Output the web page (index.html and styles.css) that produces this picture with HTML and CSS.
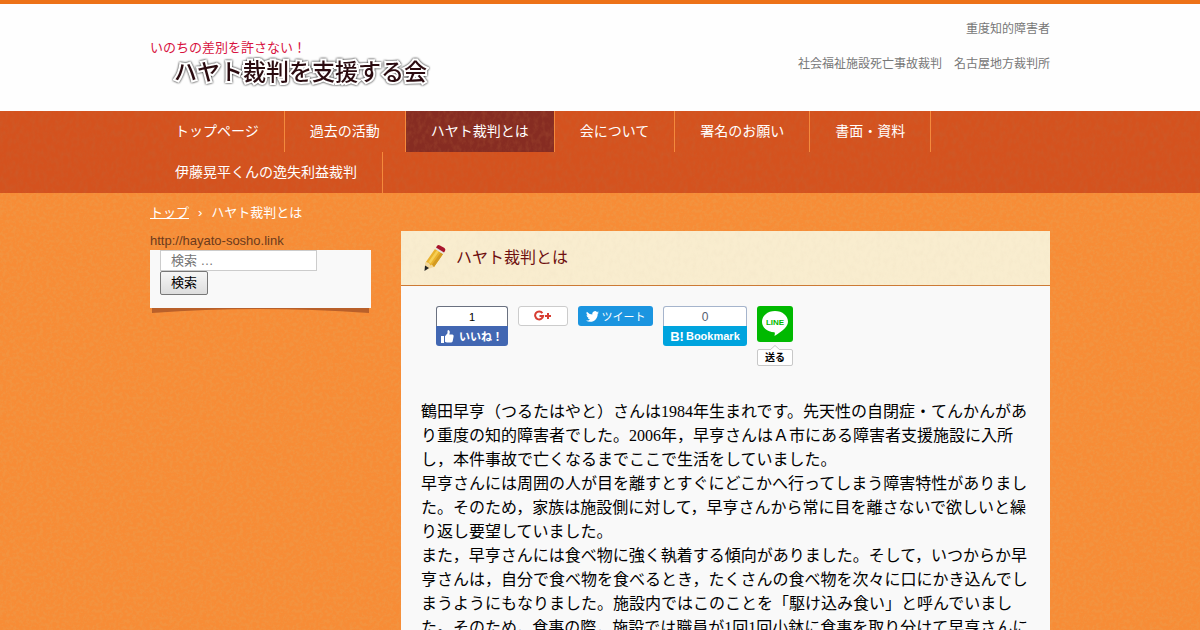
FILE: index.html
```html
<!DOCTYPE html>
<html lang="ja">

<head>
  <meta charset="UTF-8" />
  <meta name="viewport" content="width=device-width, initial-scale=1" />
  <title>ハヤト裁判とは</title>
  <link rel="stylesheet" href="styles.css">
</head>

<body>
  <header class="header">
    <div class="inner header-inner">
      <a class="logo" href="#">
        <span class="logo-sub">いのちの差別を許さない！</span>
        <span class="logo-main">ハヤト裁判を支援する会</span>
      </a>
      <div class="header-text">
        <p>重度知的障害者</p>
        <p>社会福祉施設死亡事故裁判　名古屋地方裁判所</p>
      </div>
    </div>
  </header>

  <nav class="nav">
    <ul class="inner nav-list">
      <li><a href="#">トップページ</a></li>
      <li><a href="#">過去の活動</a></li>
      <li><a class="current" href="#">ハヤト裁判とは</a></li>
      <li><a href="#">会について</a></li>
      <li><a href="#">署名のお願い</a></li>
      <li><a href="#">書面・資料</a></li>
      <li><a href="#">伊藤晃平くんの逸失利益裁判</a></li>
    </ul>
  </nav>

  <div class="inner">
    <div class="breadcrumb"><a href="#">トップ</a><span>›</span>ハヤト裁判とは</div>

    <div class="columns">
      <aside class="sidebar">
        <div class="site-url">http://hayato-sosho.link</div>
        <form class="search">
          <input type="search" placeholder="検索 …" aria-label="検索" />
          <button type="submit">検索</button>
        </form>
        <svg class="search-shadow" viewBox="0 0 217 6" preserveAspectRatio="none" aria-hidden="true">
          <path d="M0 0H217V5Q160 1 108 1Q57 1 0 5Z" fill="#b9602a" />
        </svg>
      </aside>

      <main class="article">
        <h1 class="article-title">
          <svg width="24" height="28" viewBox="0 0 24 28" aria-hidden="true">
            <path d="M2 19L12 5L20 10L11 23L2 26Z" fill="#f2d79b" />
            <path d="M3 18L12 5L20 10L11 23L9 20.500L7.500 21.500L6 19Z" fill="#e9b22d" />
            <path d="M5.500 18L14 6L16 7.300L7.500 19.500Z" fill="#f6cf55" />
            <path d="M9 20.500L17.800 8.500L20 10L11 23Z" fill="#d39a22" />
            <path d="M12 5L13.500 3L21.500 8L20 10Z" fill="#e6e2dc" />
            <path d="M13 3.500L14 2Q15 .5 17 1.500L21.500 4Q23 5.500 22 7L21 8.500Z" fill="#a8142c" />
            <path d="M2 21.500L6 24L1.500 27Z" fill="#222" />
          </svg>
          ハヤト裁判とは
        </h1>

        <div class="share">
          <div class="share-item facebook">
            <span class="count">1</span>
            <a href="#">
              <svg width="13" height="13" viewBox="0 0 13 13" aria-hidden="true">
                <path d="M0 6H3V13H0ZM4 6.300L6.500 3.200V1Q6.600 0 7.500 0Q9 .5 8.800 2.500L8.300 4.600H11.500Q13 5 12.600 6.500L11.600 11.500Q11.200 12.600 10 12.600H6Q5 12.500 4 11.800Z" fill="#fff" />
              </svg>
              いいね！
            </a>
          </div>
          <a class="share-item google" href="#" aria-label="Google+">
            <svg width="18" height="12" viewBox="0 0 18 12" aria-hidden="true">
              <path d="M8.400 3.100A4 4 0 1 0 9.100 6H5.500M11 6H17M14 3V9" fill="none" stroke="#d73d32" stroke-width="2" />
            </svg>
          </a>
          <a class="share-item twitter" href="#">
            <svg width="13" height="11" viewBox="0 0 24 20" aria-hidden="true">
              <path d="M24 2.400a10 10 0 0 1-2.800.8A5 5 0 0 0 23.300.5a10 10 0 0 1-3.100 1.200A4.900 4.900 0 0 0 11.800 6.200 14 14 0 0 1 1.700 1a4.900 4.900 0 0 0 1.500 6.600A5 5 0 0 1 1 7v.1a4.900 4.900 0 0 0 3.900 4.800 5 5 0 0 1-2.200.1 4.900 4.900 0 0 0 4.600 3.400A9.900 9.900 0 0 1 0 17.500 14 14 0 0 0 7.500 19.700c9.100 0 14.300-7.700 14-14.600A10 10 0 0 0 24 2.400z" fill="#fff" />
            </svg>
            ツイート
          </a>
          <div class="share-item hatena">
            <span class="count">0</span>
            <a href="#"><b>B!</b>Bookmark</a>
          </div>
          <a class="share-item line" href="#">
            <span class="line-icon">
              <svg width="28" height="26" viewBox="0 0 28 26" aria-hidden="true">
                <path d="M14 0C21.500 0 27 4.800 27 10.700C27 15 22.500 19.500 13.500 25Q14.300 22 13.500 21.300C6 20.800 1 16.500 1 10.700C1 4.800 6.500 0 14 0Z" fill="#fff" />
                <text class="line-word" x="14" y="14" text-anchor="middle">LINE</text>
              </svg>
            </span>
            <svg class="line-tip" width="10" height="5" viewBox="0 0 10 5" aria-hidden="true">
              <path d="M0 5L5 .5L10 5" fill="#fff" stroke="#c8c8c8" />
            </svg>
            <span class="line-label">送る</span>
          </a>
        </div>

        <div class="article-body">
          <p>鶴田早亨（つるたはやと）さんは1984年生まれです。先天性の自閉症・てんかんがあり重度の知的障害者でした。2006年，早亨さんはＡ市にある障害者支援施設に入所し，本件事故で亡くなるまでここで生活をしていました。</p>
          <p>早亨さんには周囲の人が目を離すとすぐにどこかへ行ってしまう障害特性がありました。そのため，家族は施設側に対して，早亨さんから常に目を離さないで欲しいと繰り返し要望していました。</p>
          <p>また，早亨さんには食べ物に強く執着する傾向がありました。そして，いつからか早亨さんは，自分で食べ物を食べるとき，たくさんの食べ物を次々に口にかき込んでしまうようにもなりました。施設内ではこのことを「駆け込み食い」と呼んでいました。そのため，食事の際，施設では職員が1回1回小鉢に食事を取り分けて早亨さんに</p>
        </div>
      </main>
    </div>
  </div>
</body>

</html>
```
FILE: styles.css
```css
:root {
  --grain: url("data:image/svg+xml,%3Csvg xmlns='http://www.w3.org/2000/svg' width='200' height='200'%3E%3Cfilter id='n' x='0' y='0' width='100%25' height='100%25'%3E%3CfeTurbulence type='fractalNoise' baseFrequency='.3' numOctaves='3' stitchTiles='stitch'/%3E%3CfeColorMatrix values='0 0 0 0 .78 0 0 0 0 .38 0 0 0 0 .1 4 0 0 0 -1.7'/%3E%3C/filter%3E%3Crect width='200' height='200' filter='url(%23n)' opacity='.25'/%3E%3C/svg%3E");
  --fiber: url("data:image/svg+xml,%3Csvg xmlns='http://www.w3.org/2000/svg' width='200' height='200'%3E%3Cfilter id='n' x='0' y='0' width='100%25' height='100%25'%3E%3CfeTurbulence type='fractalNoise' baseFrequency='.25 .15' numOctaves='3' stitchTiles='stitch'/%3E%3CfeColorMatrix values='0 0 0 0 .5 0 0 0 0 .15 0 0 0 0 .05 2 0 0 0 -.8'/%3E%3C/filter%3E%3Crect width='200' height='200' filter='url(%23n)' opacity='.25'/%3E%3C/svg%3E");
  --paper: url("data:image/svg+xml,%3Csvg xmlns='http://www.w3.org/2000/svg' width='200' height='200'%3E%3Cfilter id='n' x='0' y='0' width='100%25' height='100%25'%3E%3CfeTurbulence type='fractalNoise' baseFrequency='.25 .15' numOctaves='3' stitchTiles='stitch'/%3E%3CfeColorMatrix values='0 0 0 0 .8 0 0 0 0 .7 0 0 0 0 .5 2 0 0 0 -.8'/%3E%3C/filter%3E%3Crect width='200' height='200' filter='url(%23n)' opacity='.2'/%3E%3C/svg%3E");
}

* {
  box-sizing: border-box;
}

body {
  margin: 0;
  background: #f78c36 var(--grain);
  font-family: "Liberation Sans", "Noto Sans CJK JP", sans-serif;
  font-size: 13px;
  color: #000;
}

a {
  color: inherit;
  text-decoration: none;
}

.inner {
  max-width: 900px;
  margin: 0 auto;
}

/* header */
.header {
  background: #fefefe;
  border-top: 4px solid #ed7218;
}

.header-inner {
  display: flex;
  justify-content: space-between;
  min-height: 107px;
}

.logo {
  display: flex;
  flex-direction: column;
  padding-top: 35px;
}

.logo-sub {
  font-size: 13px;
  line-height: 18px;
  color: #d8123f;
}

.logo-main {
  padding-left: 24px;
  font-size: 23px;
  font-weight: 500;
  line-height: 30px;
  color: #2b0b10;
  -webkit-text-stroke: 4px #fff;
  paint-order: stroke fill;
  filter: drop-shadow(0 0 1px #000);
}

.header-text {
  padding-top: 16px;
  font-size: 12px;
  line-height: 18px;
  color: #777;
  text-align: right;
}

.header-text p {
  margin: 0 0 17px;
}

/* navigation */
.nav {
  background: #d4521e var(--fiber);
}

.nav-list {
  display: flex;
  flex-wrap: wrap;
  padding: 0;
  list-style: none;
}

.nav-list a {
  display: block;
  padding: 0 25px;
  border-right: 1px solid #f48a3c;
  font-size: 14px;
  line-height: 41px;
  color: #fff;
}

.nav-list .current {
  background: #862c22 var(--fiber);
}

.breadcrumb {
  padding: 10px 0 8px;
  line-height: 20px;
  color: #fff;
}

.breadcrumb a {
  text-decoration: underline;
}

.breadcrumb span {
  margin: 0 9px;
}

.columns {
  display: flex;
  align-items: flex-start;
  gap: 30px;
}

/* sidebar */
.sidebar {
  flex: 0 0 221px;
}

.site-url {
  line-height: 19px;
  color: #6b3a1c;
}

.search {
  display: flex;
  flex-direction: column;
  align-items: flex-start;
  padding: 0 10px 13px;
  background: #f9f9f9;
}

.search input {
  width: 157px;
  height: 21px;
  margin: 0;
  padding: 0 10px;
  border: 1px solid #ccc;
  background: #fff;
  font: inherit;
  appearance: none;
}

.search input::placeholder {
  color: #757575;
}

.search button {
  height: 24px;
  padding: 0 10px;
  border: 1px solid #777;
  border-radius: 2px;
  background: linear-gradient(#f6f6f6, #ddd);
  font: inherit;
  line-height: 20px;
}

.search-shadow {
  display: block;
  width: 100%;
  height: 6px;
  padding: 0 2px;
}

/* article */
.article {
  flex: 1;
  min-width: 0;
  background: #f9f9f9;
}

.article-title {
  display: flex;
  align-items: center;
  gap: 9px;
  margin: 0;
  padding: 13px 22px;
  border-bottom: 1px solid #cc7a35;
  background: #f9edcf var(--paper);
  font-size: 16px;
  font-weight: 400;
  line-height: 28px;
  color: #6e0f0f;
}

.share {
  display: flex;
  align-items: flex-start;
  gap: 10px;
  padding: 20px 35px 34px;
  font-size: 11px;
}

.facebook,
.hatena {
  display: flex;
  flex-direction: column;
  text-align: center;
}

.count {
  height: 20px;
  border: 1px solid #6a7180;
  border-bottom: 0;
  border-radius: 3px 3px 0 0;
  background: #fff;
  line-height: 20px;
}

.facebook {
  width: 72px;
}

.facebook a,
.hatena a {
  display: flex;
  align-items: center;
  justify-content: center;
  height: 20px;
  border-radius: 0 0 3px 3px;
  color: #fff;
  font-weight: 700;
}

.facebook a {
  gap: 5px;
  background: #4267b2;
}

.hatena {
  width: 84px;
}

.hatena .count {
  border-color: #a5b4cc;
  font-size: 12px;
  color: #555e70;
}

.hatena a {
  gap: 2px;
  background: #00a4de;
}

.hatena b {
  font-size: 13px;
}

.google,
.twitter {
  display: flex;
  align-items: center;
  justify-content: center;
  height: 20px;
  border-radius: 3px;
}

.google {
  width: 50px;
  border: 1px solid #ccc;
  background: #fff;
}

.twitter {
  width: 75px;
  gap: 3px;
  background: #1b95e0;
  color: #fff;
}

.line {
  display: flex;
  flex-direction: column;
  align-items: center;
  width: 36px;
}

.line-icon {
  display: flex;
  align-items: center;
  justify-content: center;
  width: 36px;
  height: 36px;
  border-radius: 3px;
  background: #00b900;
}

.line-word {
  font-size: 8px;
  font-weight: 700;
  fill: #00b900;
}

.line-tip {
  z-index: 1;
  margin: 3px 0 -1px;
}

.line-label {
  width: 36px;
  height: 17px;
  border: 1px solid #c8c8c8;
  border-radius: 2px;
  background: #fff;
  font-size: 10px;
  font-weight: 700;
  line-height: 15px;
  text-align: center;
}

.article-body {
  padding: 0 20px 20px;
  font-family: "Liberation Serif", "Noto Sans CJK JP", serif;
  font-size: 16px;
  line-height: 24px;
}

.article-body p {
  margin: 0;
}
```
